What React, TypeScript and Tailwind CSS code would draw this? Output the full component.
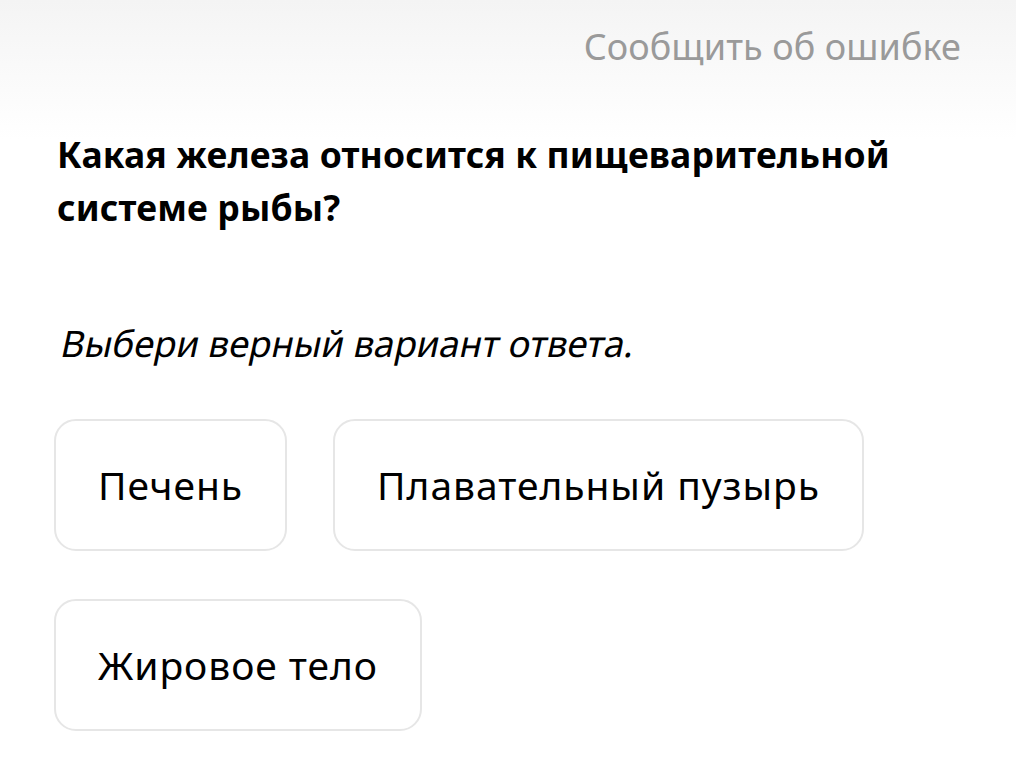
import React from "react";

const options = [["Печень", "Плавательный пузырь"], ["Жировое тело"]];

export default function App() {
  return (
    <div
      className="w-[1016px] h-[763px] overflow-hidden bg-white"
      style={{ fontFamily: '"Noto Sans", "Open Sans", sans-serif' }}
    >
      <div className="bg-gradient-to-b from-[#f4f4f4] to-white h-[140px] -mb-[140px]" />
      <div className="relative px-[57px]">
        <div className="flex justify-end pt-[24px] -mr-[2px]">
          <span className="text-[36px] leading-[46px] text-[#9a9a9a] tracking-[0.1px]">Сообщить об ошибке</span>
        </div>
        <h1 className="mt-[58px] text-[35.5px] leading-[53px] font-bold text-black tracking-[0.15px]">
          Какая железа относится к пищеварительной
          <br />
          системе рыбы?
        </h1>
        <p className="mt-[86px] text-[36.5px] leading-[46px] text-black">
          <span className="inline-block -skew-x-12 origin-bottom-left">Выбери верный вариант ответа.</span>
        </p>
        <div className="mt-[53px] -ml-[3px] flex flex-col gap-[48px]">
          {options.map((row, i) => (
            <div key={i} className="flex gap-[46px]">
              {row.map((o) => (
                <div
                  key={o}
                  className="h-[132px] px-[42px] flex items-center rounded-[22px] border-2 border-[#e6e6e6] bg-white text-[39px] tracking-[0.95px] text-black"
                >
                  {o}
                </div>
              ))}
            </div>
          ))}
        </div>
      </div>
    </div>
  );
}
